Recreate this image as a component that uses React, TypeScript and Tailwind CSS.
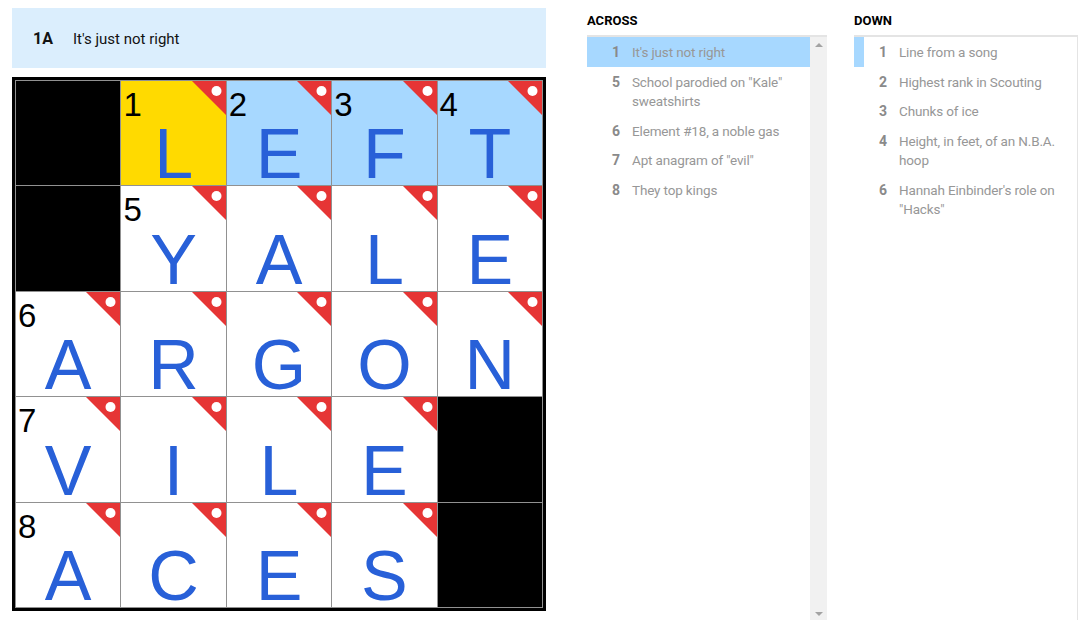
type Cell = { ch?: string; num?: number; tone?: 'sel' | 'word' };

const rows: Cell[][] = [
  [{}, { ch: 'L', num: 1, tone: 'sel' }, { ch: 'E', num: 2, tone: 'word' }, { ch: 'F', num: 3, tone: 'word' }, { ch: 'T', num: 4, tone: 'word' }],
  [{}, { ch: 'Y', num: 5 }, { ch: 'A' }, { ch: 'L' }, { ch: 'E' }],
  [{ ch: 'A', num: 6 }, { ch: 'R' }, { ch: 'G' }, { ch: 'O' }, { ch: 'N' }],
  [{ ch: 'V', num: 7 }, { ch: 'I' }, { ch: 'L' }, { ch: 'E' }, {}],
  [{ ch: 'A', num: 8 }, { ch: 'C' }, { ch: 'E' }, { ch: 'S' }, {}],
];

const across = [
  { n: 1, text: "It's just not right" },
  { n: 5, text: 'School parodied on "Kale" sweatshirts' },
  { n: 6, text: 'Element #18, a noble gas' },
  { n: 7, text: 'Apt anagram of "evil"' },
  { n: 8, text: 'They top kings' },
];

const down = [
  { n: 1, text: 'Line from a song' },
  { n: 2, text: 'Highest rank in Scouting' },
  { n: 3, text: 'Chunks of ice' },
  { n: 4, text: 'Height, in feet, of an N.B.A. hoop' },
  { n: 6, text: 'Hannah Einbinder\'s role on "Hacks"' },
];

const clueFont = { fontFamily: '"Liberation Sans Narrow", Roboto, "Liberation Sans", sans-serif' };

function GridCell({ cell }: { cell: Cell }) {
  if (!cell.ch) return <div className="bg-black" />;
  const bg = cell.tone === 'sel' ? 'bg-[#ffda00]' : cell.tone === 'word' ? 'bg-[#a7d8ff]' : 'bg-white';
  return (
    <div className={`relative flex items-end justify-center ${bg}`}>
      {cell.num && (
        <span className="absolute left-[2px] top-[7px] text-[33px] leading-none text-black">{cell.num}</span>
      )}
      <svg className="absolute right-0 top-0" width="34" height="34" viewBox="0 0 34 34">
        <polygon points="0,0 34,0 34,34" fill="#e63535" />
        <circle cx="24.5" cy="10" r="5" fill="#fff" />
      </svg>
      <span className="text-[70px] leading-[62px] text-[#2860d8]">{cell.ch}</span>
    </div>
  );
}

function ClueRow({ n, text, active, bar }: { n: number; text: string; active?: boolean; bar?: boolean }) {
  return (
    <div className={`relative flex pt-[6px] pb-[4px] pr-[6px] ${active ? 'bg-[#a7d8ff]' : ''}`}>
      {bar && <div className="absolute left-0 top-0 h-full w-[10px] bg-[#a7d8ff]" />}
      <span className="w-[33px] shrink-0 text-right text-[14px] font-bold leading-[19.5px] text-[#8a8a8a]">{n}</span>
      <span className="ml-3 text-[13.5px] leading-[19.5px] tracking-[-0.15px] text-[#979797]">{text}</span>
    </div>
  );
}

export default function App() {
  return (
    <div className="flex h-[620px] w-[1078px] overflow-hidden bg-white pl-[12px]" style={{ fontFamily: '"Liberation Sans", Arial, sans-serif' }}>
      <div className="w-[534px] pt-[8px]">
        <div className="flex h-[60px] items-center bg-[#dbeefd] pl-[21px] pt-[2px] text-[15px] text-[#121212]" style={clueFont}>
          <span className="w-[40px] text-[16px] font-bold">1A</span>
          <span>It's just not right</span>
        </div>
        <div className="mt-[9px] border-[3px] border-black bg-[#919191] p-px">
          <div className="grid h-[526px] grid-cols-5 grid-rows-5 gap-px">
            {rows.flat().map((c, i) => (
              <GridCell key={i} cell={c} />
            ))}
          </div>
        </div>
      </div>

      <div className="ml-[41px] w-[240px] pt-[12px]" style={clueFont}>
        <div className="h-[18px] text-[13px] font-bold leading-[18px] text-black">ACROSS</div>
        <div className="mt-[5px] flex h-[600px] border-t-2 border-[#e4e4e4]">
          <div className="flex-1">
            {across.map((c, i) => (
              <ClueRow key={c.n} n={c.n} text={c.text} active={i === 0} />
            ))}
          </div>
          <div className="flex h-[583px] w-[17px] flex-col items-center justify-between bg-[#f1f1f1] pt-[6px] pb-[4px]">
            <div className="h-0 w-0 border-x-[4px] border-b-[4px] border-x-transparent border-b-[#a3a3a3]" />
            <div className="h-0 w-0 border-x-[4px] border-t-[4px] border-x-transparent border-t-[#a3a3a3]" />
          </div>
        </div>
      </div>

      <div className="ml-[27px] w-[224px] pt-[12px]" style={clueFont}>
        <div className="h-[18px] text-[13px] font-bold leading-[18px] text-black">DOWN</div>
        <div className="mt-[5px] h-[600px] border-r border-t-2 border-[#e4e4e4]">
          {down.map((c, i) => (
            <ClueRow key={c.n} n={c.n} text={c.text} bar={i === 0} />
          ))}
        </div>
      </div>
    </div>
  );
}
